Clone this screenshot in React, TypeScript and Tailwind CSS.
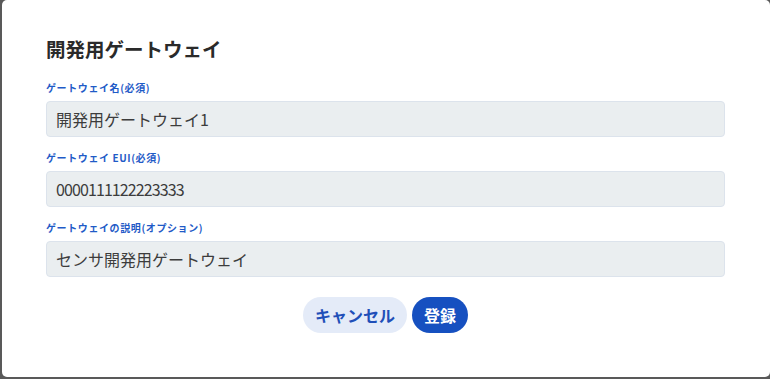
import React from "react";

const font = { fontFamily: '"Noto Sans CJK JP", "Noto Sans", sans-serif' };

function Field({ label, children }: { label: string; children: React.ReactNode }) {
  return (
    <div className="flex flex-col">
      <label className="text-[10px] leading-[12px] font-bold text-[#1f5bc7] tracking-[0.6px]">{label}</label>
      <div className="mt-[7px] h-[36px] rounded-[4px] border border-[#dce3ec] bg-[#eaeef0] pl-[9px] flex items-center text-[16px] font-normal text-[#3c3c3c]">
        {children}
      </div>
    </div>
  );
}

export default function App() {
  return (
    <div className="w-[770px] h-[379px] bg-[#595959] overflow-hidden" style={font}>
      <div className="ml-[2px] w-[768px] h-[377px] bg-white rounded-[5px] pl-[44px] pr-[45px] pt-[35px] flex flex-col">
        <h2 className="text-[19.5px] leading-[28px] font-bold text-[#2a2a2a]">開発用ゲートウェイ</h2>
        <div className="mt-[19px] flex flex-col gap-[15px]">
          <Field label="ゲートウェイ名(必須)">開発用ゲートウェイ1</Field>
          <Field label="ゲートウェイ EUI(必須)">
            <span className="tracking-[-0.9px]">0000111122223333</span>
          </Field>
          <Field label="ゲートウェイの説明(オプション)">センサ開発用ゲートウェイ</Field>
        </div>
        <div className="mt-[20px] flex justify-center gap-[5px]">
          <button className="h-[36px] px-[12px] rounded-full bg-[#e4ebf8] text-[#1f4fb8] text-[16px] font-bold">キャンセル</button>
          <button className="h-[36px] px-[12px] rounded-full bg-[#1650c0] text-white text-[16px] font-bold">登録</button>
        </div>
      </div>
    </div>
  );
}
